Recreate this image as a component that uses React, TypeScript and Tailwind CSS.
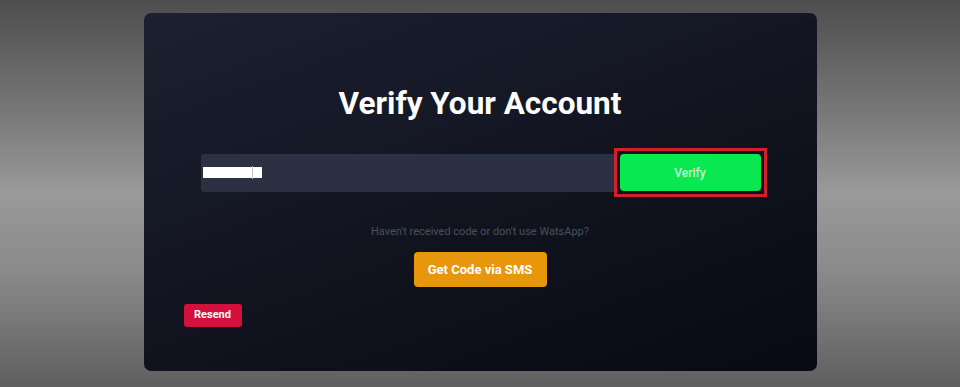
export default function App() {
  return (
    <div
      className="w-[960px] h-[387px] flex items-start justify-center pt-[13px]"
      style={{ background: "linear-gradient(to bottom, #4d4d4d 0%, #7a7a7a 30%, #9a9a9a 50%, #8a8a8a 70%, #5f5f5f 100%)", fontFamily: "Roboto, 'Liberation Sans', sans-serif" }}
    >
      <div
        className="w-[673px] h-[358px] rounded-[7px] flex flex-col pt-[73px] px-[40px]"
        style={{ background: "linear-gradient(160deg, #1c2030 0%, #131622 45%, #070a12 100%)" }}
      >
        <h1 className="text-center text-white font-bold text-[31.5px] leading-[36px]">Verify Your Account</h1>
        <div className="mt-[26px] flex items-center">
          <div className="ml-[17px] w-[414px] h-[38px] bg-[#2b3042] rounded-l-[3px] flex items-center pl-[2px]">
            <div className="relative w-[59px] h-[11px] bg-white">
              <div className="absolute left-[49px] top-[-1px] w-[1px] h-[13px] bg-[#c0c4cc]" />
            </div>
          </div>
          <div className="ml-[-1px] border-[3px] border-[#d21f2d] p-[3px]">
            <button className="w-[141px] h-[37px] bg-[#0ae84f] rounded-[4px] text-[#c8f5d6] text-[12px] font-medium">Verify</button>
          </div>
        </div>
        <p className="mt-[28px] text-center text-[#4a4f5e] text-[11px] leading-[14px]">Haven't received code or don't use WatsApp?</p>
        <div className="mt-[13px] flex justify-center">
          <button className="w-[133px] h-[35px] bg-[#e8960c] rounded-[4px] text-white font-bold text-[13px]">Get Code via SMS</button>
        </div>
        <div className="mt-[14px]">
          <button className="w-[58px] h-[23px] bg-[#d4103c] rounded-[3px] text-white font-bold text-[11px]">Resend</button>
        </div>
      </div>
    </div>
  );
}
